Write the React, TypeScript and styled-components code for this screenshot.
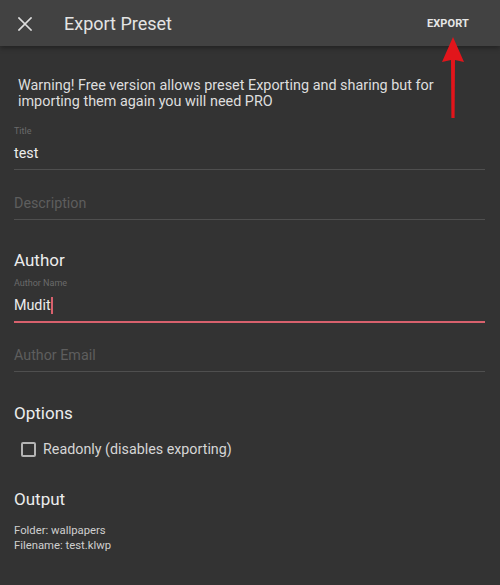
import React from "react";
import styled, { createGlobalStyle } from "styled-components";

const Global = createGlobalStyle`
  html, body { margin: 0; padding: 0; background: #333333; }
  body { font-family: Roboto, "Noto Sans", sans-serif; -webkit-font-smoothing: antialiased; }
  * { box-sizing: border-box; }
`;

const Screen = styled.div`
  position: relative;
  width: 500px;
  height: 585px;
  background: #333333;
  overflow: hidden;
`;

const Toolbar = styled.header`
  position: relative;
  z-index: 1;
  height: 46px;
  display: flex;
  align-items: center;
  padding: 0 31px 0 18px;
  background: #424242;
  box-shadow: 0 2px 5px rgba(0, 0, 0, 0.35);
`;

const CloseButton = styled.div`
  width: 14px;
  height: 14px;
  display: flex;
  margin-right: 32px;
  margin-top: 1px;
`;

const ToolbarTitle = styled.h1`
  flex: 1;
  margin: 0;
  font-size: 18px;
  font-weight: 400;
  color: #e4e4e4;
`;

const ActionButton = styled.span`
  font-size: 11px;
  font-weight: 700;
  color: #e6e6e6;
  letter-spacing: 0.1px;
  margin-top: 1px;
`;

const Content = styled.main`
  padding: 0 15px 0 14px;
`;

const Warning = styled.p`
  margin: 32px 0 10px 4px;
  font-size: 14.4px;
  line-height: 16px;
  color: #dedede;
`;

const Field = styled.div<{ $focused?: boolean }>`
  padding-top: 6px;
  border-bottom: ${(p) => (p.$focused ? "2px solid #d8616d" : "1px solid #4f4f4f")};
  margin-bottom: ${(p) => (p.$focused ? "-1px" : "0")};
  padding-bottom: 6px;
`;

const FieldLabel = styled.div`
  height: 11px;
  margin-bottom: 6px;
  font-size: 9px;
  line-height: 11px;
  color: #6a6a6a;
`;

const FieldValue = styled.div<{ $placeholder?: boolean }>`
  display: flex;
  align-items: center;
  height: 20px;
  font-size: 14.3px;
  line-height: 20px;
  color: ${(p) => (p.$placeholder ? "#5e5e5e" : "#ececec")};
`;

const Caret = styled.span`
  display: inline-block;
  width: 2px;
  height: 17px;
  background: #d8616d;
`;

const SectionHeading = styled.h2<{ $top: number }>`
  margin: ${(p) => p.$top}px 0 0 0;
  font-size: 17px;
  font-weight: 400;
  line-height: 20px;
  color: #ececec;
`;

const CheckRow = styled.label`
  display: flex;
  align-items: center;
  height: 20px;
  margin: 16px 0 0 7px;
  gap: 7px;
  font-size: 14.3px;
  color: #d6d6d6;
`;

const CheckBox = styled.span`
  width: 15px;
  height: 15px;
  border: 2px solid #b4b4b4;
  border-radius: 2px;
`;

const InfoLines = styled.div`
  margin-top: 14px;
  font-size: 11.3px;
  line-height: 15px;
  color: #cfcfcf;
`;

const Arrow = styled.svg`
  position: absolute;
  left: 440px;
  top: 34px;
  z-index: 2;
`;

export default function App() {
  return (
    <>
      <Global />
      <Screen>
        <Toolbar>
          <CloseButton>
            <svg width="14" height="14" viewBox="0 0 14 14">
              <path d="M1 1 L13 13 M13 1 L1 13" stroke="#dddddd" strokeWidth="1.7" strokeLinecap="square" />
            </svg>
          </CloseButton>
          <ToolbarTitle>Export Preset</ToolbarTitle>
          <ActionButton>EXPORT</ActionButton>
        </Toolbar>
        <Content>
          <Warning>
            Warning! Free version allows preset Exporting and sharing but for importing them again you will need PRO
          </Warning>
          <Field>
            <FieldLabel>Title</FieldLabel>
            <FieldValue>test</FieldValue>
          </Field>
          <Field>
            <FieldLabel />
            <FieldValue $placeholder>Description</FieldValue>
          </Field>
          <SectionHeading $top={30}>Author</SectionHeading>
          <Field $focused style={{ marginTop: 2 }}>
            <FieldLabel>Author Name</FieldLabel>
            <FieldValue>
              Mudit<Caret />
            </FieldValue>
          </Field>
          <Field>
            <FieldLabel />
            <FieldValue $placeholder>Author Email</FieldValue>
          </Field>
          <SectionHeading $top={31}>Options</SectionHeading>
          <CheckRow>
            <CheckBox />
            Readonly (disables exporting)
          </CheckRow>
          <SectionHeading $top={30}>Output</SectionHeading>
          <InfoLines>
            <div>Folder: wallpapers</div>
            <div>Filename: test.klwp</div>
          </InfoLines>
        </Content>
        <Arrow width="26" height="88" viewBox="0 0 26 88">
          <path d="M13 3 L24 28 L15 26 L14.6 84 L11.4 84 L11 26 L2 28 Z" fill="#e2151b" />
        </Arrow>
      </Screen>
    </>
  );
}
